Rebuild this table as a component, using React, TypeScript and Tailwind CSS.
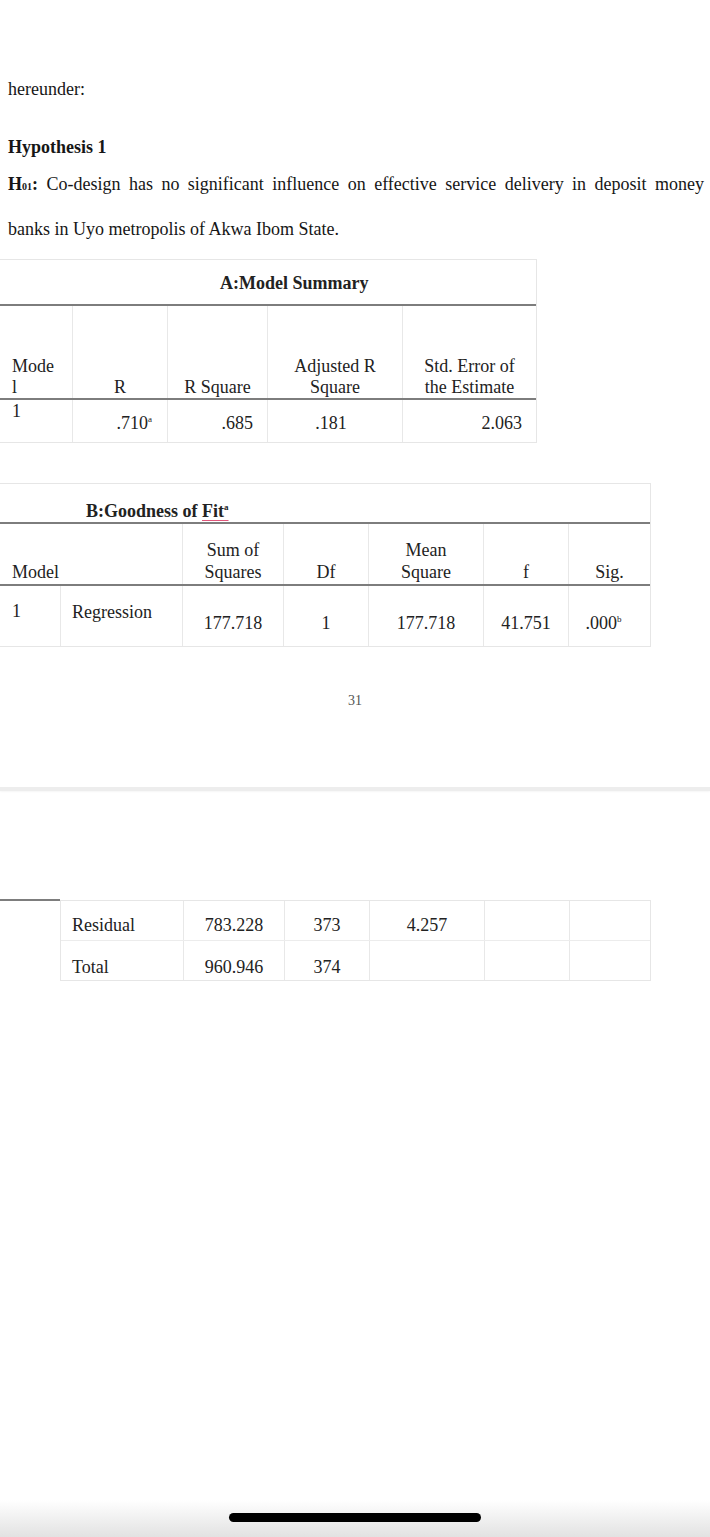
import React from 'react';

const dark = 'h-[2px] bg-[#7d7d7d]';
const vline = 'border-l border-[#e8e8e8]';

function Sup({ children }: { children: React.ReactNode }) {
  return <sup className="text-[9px] top-[-0.8em]">{children}</sup>;
}

export default function App() {
  return (
    <div className="min-h-[1537px] w-[710px] bg-white flex flex-col font-['Liberation_Serif',serif] text-[18px] text-[#161616]">
      {/* Page text */}
      <div className="px-[8px] pr-[6px]">
        <p className="mt-[69px] leading-[40px]">hereunder:</p>
        <p className="mt-[26px] leading-[24px] font-bold">Hypothesis 1</p>
        <p className="mt-[4px] leading-[42px] text-justify [text-align-last:justify]">
          <b>
            H<span className="text-[10px]">01</span>:
          </b>{' '}
          Co-design has no significant influence on effective service delivery in deposit money
        </p>
        <p className="leading-[42px]">banks in Uyo metropolis of Akwa Ibom State.</p>
      </div>

      {/* A: Model Summary */}
      <div className="mt-[9px] w-[537px] border-t border-r border-[#e6e6e6] text-[#222]">
        <div className="h-[44px] pl-[220px] pt-[13px] leading-[21px] font-bold">A:Model Summary</div>
        <div className={dark} />
        <div className="grid grid-cols-[72px_95px_100px_135px_134px] h-[92px] leading-[21px]">
          <div className="flex flex-col justify-end pl-[12px]">
            <span>Mode</span>
            <span>l</span>
          </div>
          <div className={`${vline} flex items-end justify-center`}>R</div>
          <div className={`${vline} flex items-end justify-center`}>R Square</div>
          <div className={`${vline} flex flex-col justify-end items-center text-center`}>
            <span>Adjusted R</span>
            <span>Square</span>
          </div>
          <div className={`${vline} flex flex-col justify-end items-center text-center`}>
            <span>Std. Error of</span>
            <span>the Estimate</span>
          </div>
        </div>
        <div className={dark} />
        <div className="grid grid-cols-[72px_95px_100px_135px_134px] h-[43px] leading-[21px] border-b border-[#e6e6e6]">
          <div className="pl-[12px] pt-[1px]">1</div>
          <div className={`${vline} flex items-end justify-end pr-[15px] pb-[8px]`}>
            <span>
              .710<Sup>a</Sup>
            </span>
          </div>
          <div className={`${vline} flex items-end justify-end pr-[14px] pb-[8px]`}>.685</div>
          <div className={`${vline} flex items-end justify-center pb-[8px] pr-[8px]`}>.181</div>
          <div className={`${vline} flex items-end justify-end pr-[14px] pb-[8px]`}>2.063</div>
        </div>
      </div>

      {/* B: Goodness of Fit */}
      <div className="mt-[40px] w-[651px] border-t border-r border-[#e6e6e6] text-[#222]">
        <div className="h-[38px] pl-[86px] flex items-end leading-[21px] font-bold">
          <span>
            B:Goodness of{' '}
            <span className="underline decoration-[#e0567a] decoration-1 underline-offset-[3px]">
              Fit<Sup>a</Sup>
            </span>
          </span>
        </div>
        <div className={dark} />
        <div className="grid grid-cols-[60px_122px_101px_85px_115px_85px_82px] h-[60px] leading-[22px]">
          <div className="col-span-2 flex items-end pl-[12px] pb-[1px]">Model</div>
          <div className={`${vline} flex flex-col justify-end items-center pb-[1px]`}>
            <span>Sum of</span>
            <span>Squares</span>
          </div>
          <div className={`${vline} flex items-end justify-center pb-[1px]`}>Df</div>
          <div className={`${vline} flex flex-col justify-end items-center pb-[1px]`}>
            <span>Mean</span>
            <span>Square</span>
          </div>
          <div className={`${vline} flex items-end justify-center pb-[1px]`}>f</div>
          <div className={`${vline} flex items-end justify-center pb-[1px]`}>Sig.</div>
        </div>
        <div className={dark} />
        <div className="grid grid-cols-[60px_122px_101px_85px_115px_85px_82px] h-[61px] leading-[21px] border-b border-[#e6e6e6]">
          <div className="pl-[12px] pt-[15px]">1</div>
          <div className={`${vline} pl-[11px] pt-[16px]`}>Regression</div>
          <div className={`${vline} flex items-end justify-center pb-[12px]`}>177.718</div>
          <div className={`${vline} flex items-end justify-center pb-[12px]`}>1</div>
          <div className={`${vline} flex items-end justify-center pb-[12px]`}>177.718</div>
          <div className={`${vline} flex items-end justify-center pb-[12px]`}>41.751</div>
          <div className={`${vline} flex items-end justify-center pb-[12px] pr-[12px]`}>
            <span>
              .000<Sup>b</Sup>
            </span>
          </div>
        </div>
      </div>

      {/* Page number */}
      <div className="mt-[46px] text-center text-[14px] leading-[16px] text-[#555]">31</div>

      {/* Page break */}
      <div className="mt-[78px] h-[4px] bg-[#ededed] shadow-[0_1px_2px_rgba(0,0,0,0.04)]" />

      {/* Continued table */}
      <div className="mt-[108px] flex text-[#222]">
        <div className="w-[60px] border-t-2 border-[#7d7d7d]" />
        <div className="w-[591px] border-t border-r border-l border-b border-[#e6e6e6] mt-[1px]">
          <div className="grid grid-cols-[122px_101px_85px_115px_85px_82px] h-[40px] leading-[21px] border-b border-[#ececec]">
            <div className="flex items-end pl-[11px] pb-[4px]">Residual</div>
            <div className={`${vline} flex items-end justify-center pb-[4px]`}>783.228</div>
            <div className={`${vline} flex items-end justify-center pb-[4px]`}>373</div>
            <div className={`${vline} flex items-end justify-center pb-[4px]`}>4.257</div>
            <div className={vline} />
            <div className={vline} />
          </div>
          <div className="grid grid-cols-[122px_101px_85px_115px_85px_82px] h-[39px] leading-[21px]">
            <div className="flex items-end pl-[11px] pb-[2px]">Total</div>
            <div className={`${vline} flex items-end justify-center pb-[2px]`}>960.946</div>
            <div className={`${vline} flex items-end justify-center pb-[2px]`}>374</div>
            <div className={vline} />
            <div className={vline} />
            <div className={vline} />
          </div>
        </div>
      </div>

      <div className="flex-1" />

      {/* Home indicator */}
      <div className="h-[37px] flex justify-center pt-[13px] bg-gradient-to-b from-white to-[#e2e2e2]">
        <div className="w-[252px] h-[9px] rounded-full bg-black" />
      </div>
    </div>
  );
}
